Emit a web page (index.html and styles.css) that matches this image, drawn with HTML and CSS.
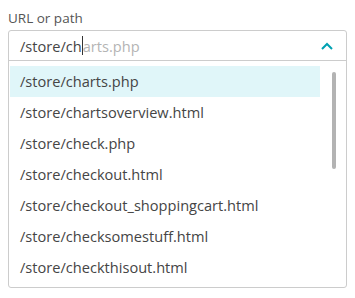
FILE: index.html
```html
<!DOCTYPE html>
<html lang="en">
<head>
  <meta charset="UTF-8">
  <title>URL or path</title>
  <link rel="stylesheet" href="styles.css">
</head>
<body>
<div class="field">
  <label class="field-label" for="url">URL or path</label>
  <div class="combo">
    <div class="combo-input" id="url">
      <span class="typed">/store/ch</span><span class="caret"></span><span class="hint">arts.php</span>
      <svg class="chevron" width="12" height="8" viewBox="0 0 12 8">
        <polyline points="1,7 6,2 11,7" />
      </svg>
    </div>
    <div class="combo-list">
      <ul class="options">
        <li class="option active">/store/charts.php</li>
        <li class="option">/store/chartsoverview.html</li>
        <li class="option">/store/check.php</li>
        <li class="option">/store/checkout.html</li>
        <li class="option">/store/checkout_shoppingcart.html</li>
        <li class="option">/store/checksomestuff.html</li>
        <li class="option">/store/checkthisout.html</li>
      </ul>
      <div class="scrollbar"></div>
    </div>
  </div>
</div>
</body>
</html>
```

FILE: styles.css
```css
html {
  background: #ffffff;
}
body {
  margin: 0;
  padding: 8px;
  font-family: "Open Sans", "DejaVu Sans", sans-serif;
  color: #4d4d4d;
}
.field-label {
  display: block;
  font-size: 13.5px;
  line-height: 16px;
  padding-top: 2px;
  margin-bottom: 4px;
  color: #555555;
}
.combo {
  width: 339px;
  box-sizing: border-box;
  border: 1px solid #cccccc;
  border-radius: 3px;
}
.combo-input {
  display: flex;
  align-items: center;
  height: 29px;
  padding: 0 13px 0 11px;
  font-size: 14.6px;
  border-bottom: 1px solid #cccccc;
}
.typed {
  color: #454545;
}
.caret {
  display: inline-block;
  width: 1px;
  height: 19px;
  background: #333333;
}
.hint {
  color: #b4b4b4;
}
.chevron {
  margin-left: auto;
}
.chevron polyline {
  fill: none;
  stroke: #00a1b2;
  stroke-width: 2;
}
.combo-list {
  display: flex;
  padding: 5px 10px 4px 1px;
}
.options {
  flex: 1;
  list-style: none;
  margin: 0;
  padding: 0;
}
.option {
  height: 31px;
  line-height: 31px;
  padding-left: 10px;
  font-size: 14.6px;
  color: #454545;
  white-space: nowrap;
}
.option.active {
  background: #e0f6f9;
}
.scrollbar {
  width: 4px;
  height: 97px;
  margin: 6px 0 0 12px;
  border-radius: 2px;
  background: #b3b3b3;
}
```
